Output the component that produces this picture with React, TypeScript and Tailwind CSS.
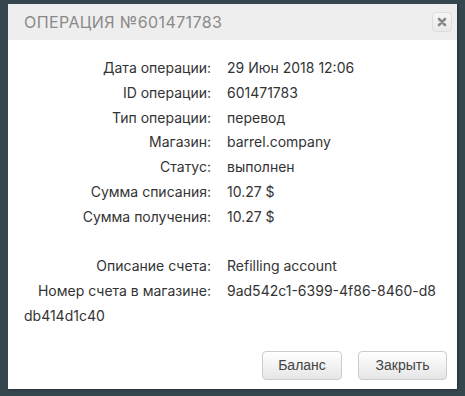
import React from "react";

const rows: [string, string][] = [
  ["Дата операции:", "29 Июн 2018 12:06"],
  ["ID операции:", "601471783"],
  ["Тип операции:", "перевод"],
  ["Магазин:", "barrel.company"],
  ["Статус:", "выполнен"],
  ["Сумма списания:", "10.27 $"],
  ["Сумма получения:", "10.27 $"],
];

function Row({ label, children }: { label: string; children: React.ReactNode }) {
  return (
    <div className="leading-[24.8px]">
      <span className="inline-block w-[187px] text-right mr-[16px]">{label}</span>
      {children}
    </div>
  );
}

export default function App() {
  return (
    <div className="w-[465px] h-[396px] bg-[#36464e] pt-[4px] pl-[8px] overflow-hidden">
      <div className="w-[449px] h-[385px] bg-white flex flex-col shadow-[1px_1px_2px_rgba(0,0,0,0.3)]" style={{ fontFamily: "Inter, 'Noto Sans', sans-serif" }}>
        <div className="h-[36px] bg-[#eeeeee] flex items-center justify-between pl-[16px] pr-[5px]">
          <div className="text-[16px] tracking-[0.4px] text-[#8a8a8a] font-normal uppercase">Операция №601471783</div>
          <button className="w-[20px] h-[20px] rounded-[4px] border border-[#dddddd] bg-gradient-to-b from-[#f6f6f6] to-[#e9e9e9] flex items-center justify-center">
            <svg width="10" height="10" viewBox="0 0 10 10">
              <path d="M2 2 L8 8 M8 2 L2 8" stroke="#888888" strokeWidth="2.6" strokeLinecap="round" />
            </svg>
          </button>
        </div>
        <div className="flex-1 px-[16px] pt-[16px] text-[14px] text-[#333333]">
          {rows.map(([l, v]) => (
            <Row key={l} label={l}>{v}</Row>
          ))}
          <div className="h-[24.8px]" />
          <Row label="Описание счета:">Refilling account</Row>
          <Row label="Номер счета в магазине:">
            9ad542c1-6399-4f86-8460-d8
            <br />
            db414d1c40
          </Row>
        </div>
        <div className="flex justify-end gap-[16px] pr-[10px] pb-[9px]" style={{ fontFamily: "'Liberation Sans', Arial, sans-serif" }}>
          <button className="w-[80px] h-[29px] rounded-[4px] border border-[#cccccc] bg-gradient-to-b from-white to-[#e6e6e6] text-[14px] text-[#444444]">Баланс</button>
          <button className="w-[89px] h-[29px] rounded-[4px] border border-[#cccccc] bg-gradient-to-b from-white to-[#e6e6e6] text-[14px] text-[#444444]">Закрыть</button>
        </div>
      </div>
    </div>
  );
}
